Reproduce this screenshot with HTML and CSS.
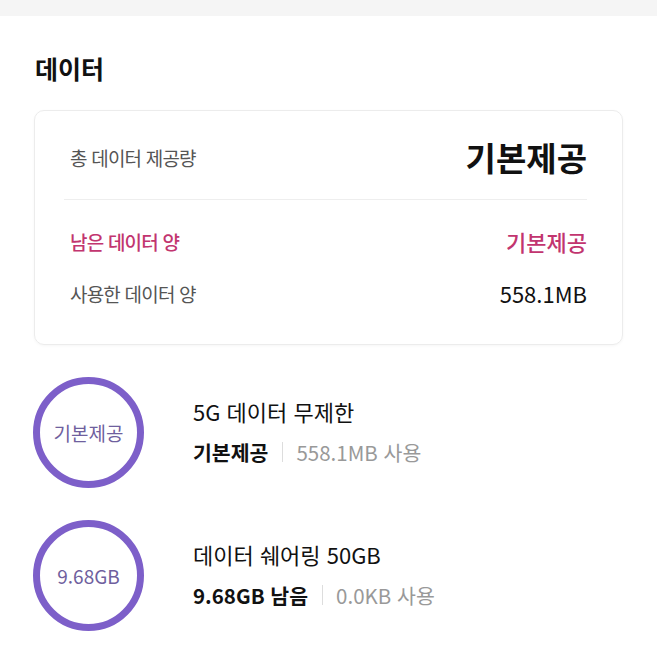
FILE: index.html
```html
<!DOCTYPE html>
<html lang="ko">
<head>
  <meta charset="UTF-8" />
  <title>데이터</title>
  <link rel="stylesheet" href="styles.css">
</head>
<body>

<div class="topbar"></div>

<div class="container">
  <h2>데이터</h2>

  <div class="summary">
    <div class="row total">
      <span class="label">총 데이터 제공량</span>
      <span class="value">기본제공</span>
    </div>
    <div class="divider"></div>
    <div class="row remain">
      <span class="label">남은 데이터 양</span>
      <span class="value">기본제공</span>
    </div>
    <div class="row used">
      <span class="label">사용한 데이터 양</span>
      <span class="value">558.1MB</span>
    </div>
  </div>

  <div class="plan">
    <div class="ring">기본제공</div>
    <div class="plan-info">
      <div class="plan-name">5G 데이터 무제한</div>
      <div class="plan-usage"><strong>기본제공</strong><span class="sep"></span><span class="used-text">558.1MB 사용</span></div>
    </div>
  </div>

  <div class="plan">
    <div class="ring">9.68GB</div>
    <div class="plan-info">
      <div class="plan-name">데이터 쉐어링 50GB</div>
      <div class="plan-usage"><strong>9.68GB 남음</strong><span class="sep"></span><span class="used-text">0.0KB 사용</span></div>
    </div>
  </div>
</div>

</body>
</html>
```

FILE: styles.css
```css
* { box-sizing: border-box; }
body {
  margin: 0;
  font-family: "Noto Sans CJK KR", "Noto Sans", sans-serif;
  background-color: #fff;
  color: #111;
}

.topbar {
  height: 16px;
  background: #f5f5f5;
}

.container {
  padding: 0 34px;
}

h2 {
  margin: 34px 0 0 1px;
  font-size: 25px;
  line-height: 36px;
  font-weight: 700;
  color: #111;
}

.summary {
  margin-top: 24px;
  border: 1px solid #ececec;
  border-radius: 10px;
  padding: 24px 35px 30px 35px;
  box-shadow: 0 1px 3px rgba(0,0,0,0.04);
}

.row {
  display: flex;
  justify-content: space-between;
  align-items: center;
}

.row .label {
  font-size: 19px;
  letter-spacing: -0.8px;
  color: #555;
}

.total { height: 44px; }

.total .value {
  font-size: 33px;
  font-weight: 700;
  color: #111;
}

.divider {
  height: 1px;
  background: #eee;
  margin: 20px 0 20px -6px;
}

.remain { height: 42px; }

.remain .label {
  color: #c2356f;
  font-weight: 500;
}

.remain .value {
  color: #c2356f;
  font-size: 22px;
  font-weight: 500;
}

.used {
  height: 42px;
  margin-top: 10px;
}

.used .value {
  font-size: 22px;
  color: #111;
}

.plan {
  display: flex;
  align-items: center;
  margin-top: 32px;
}

.plan + .plan { margin-top: 32px; }

.ring {
  width: 111px;
  height: 111px;
  border: 7px solid #7d5fc9;
  border-radius: 50%;
  display: flex;
  align-items: center;
  justify-content: center;
  font-size: 19px;
  color: #6f5f9e;
  flex-shrink: 0;
  margin-left: -1px;
}

.plan-info {
  margin-left: 49px;
  margin-top: -4px;
}

.plan-name {
  font-size: 22px;
  line-height: 30px;
  color: #111;
}

.plan-usage {
  display: flex;
  align-items: center;
  margin-top: 12px;
  font-size: 20.5px;
  line-height: 28px;
}

.plan-usage strong {
  font-weight: 700;
  color: #111;
}

.sep {
  width: 1px;
  height: 20px;
  background: #ddd;
  margin: 0 13px 0 14px;
}

.used-text {
  color: #999;
}
```
